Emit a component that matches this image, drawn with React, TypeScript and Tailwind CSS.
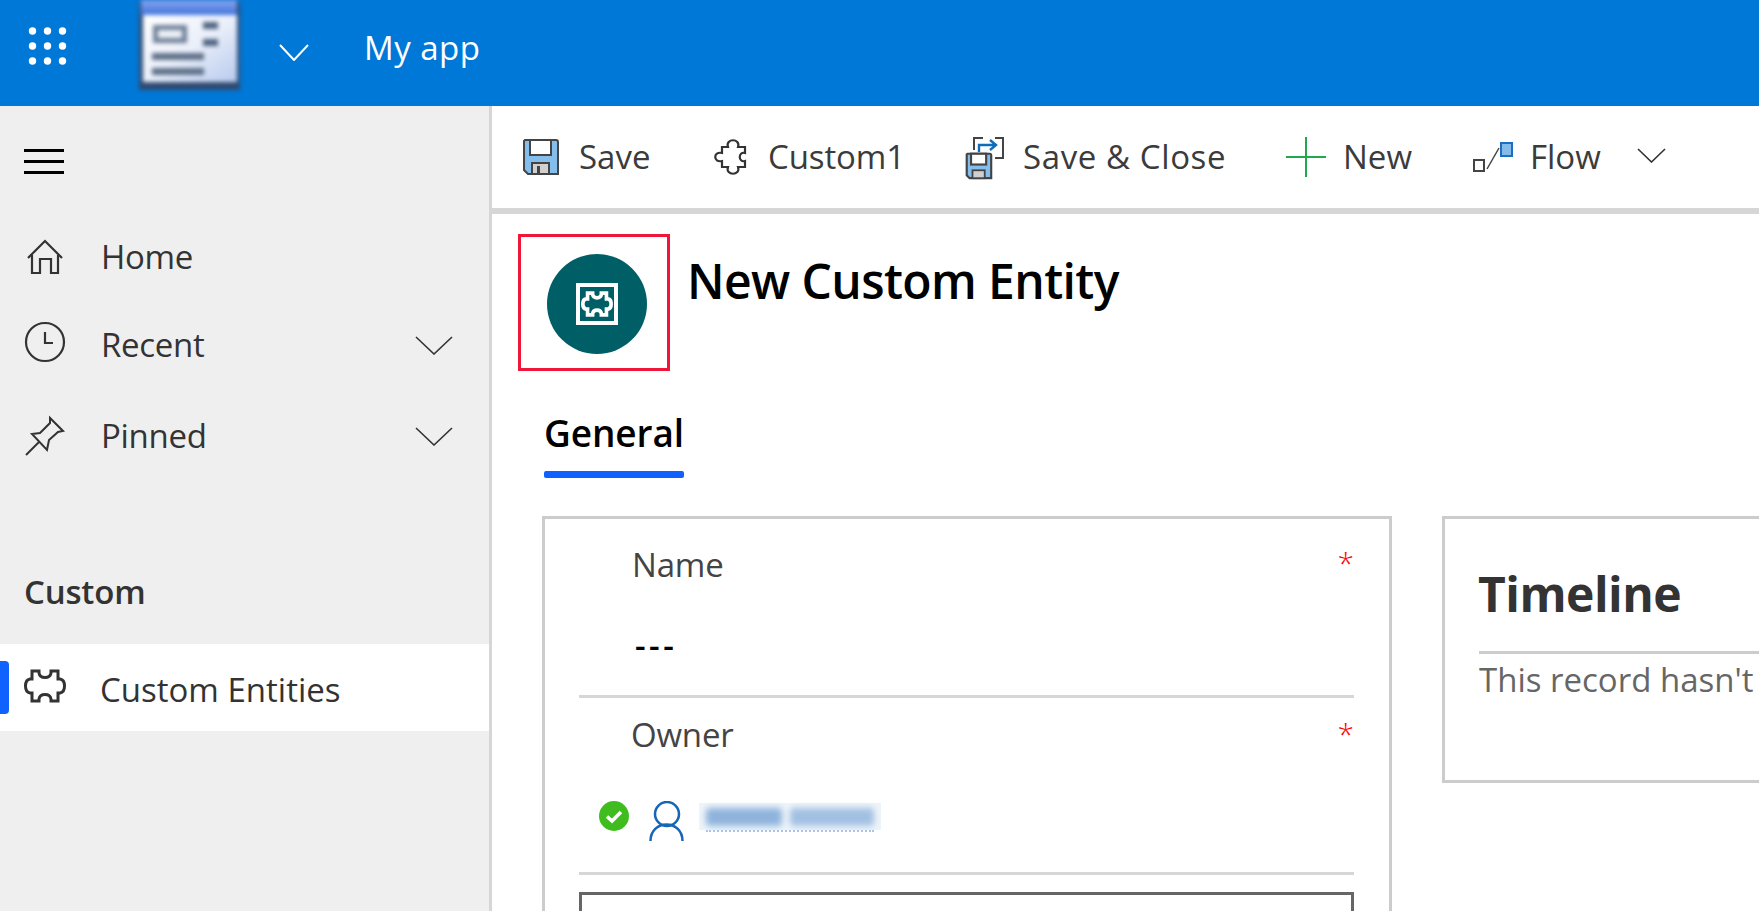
import React from 'react';

const PUZZLE = 'M17 15H24V17C25 23 35 23 36 17V15H43V23H45C51 24 51 36 45 37H43V45H36V43C35 37 25 37 24 43V45H17V37H15C9 36 9 24 15 23H17Z';

const Chevron: React.FC<{ w: number; h: number; color?: string; sw?: number }> = ({ w, h, color = '#333', sw = 1.6 }) => (
  <svg width={w} height={h} viewBox={`0 0 ${w} ${h}`} fill="none">
    <path d={`M1 1L${w / 2} ${h - 1}L${w - 1} 1`} stroke={color} strokeWidth={sw} />
  </svg>
);

const Floppy: React.FC<{ size: number }> = ({ size }) => (
  <svg width={size} height={size} viewBox="0 0 36 36">
    <path d="M2 1H33a2 2 0 0 1 2 2V35H5L1 31V2Z" fill="#83beec" stroke="#444" strokeWidth="2" />
    <rect x="7" y="1" width="21" height="15" fill="#fff" stroke="#444" strokeWidth="2" />
    <rect x="9" y="24" width="17" height="11" fill="#d0d0d0" stroke="#444" strokeWidth="2" />
    <rect x="14" y="27" width="3" height="8" fill="#444" />
  </svg>
);

const NavRow: React.FC<{ icon: React.ReactNode; label: string; chevron?: boolean; className?: string }> = ({ icon, label, chevron, className }) => (
  <div className={`flex h-[88px] items-center pl-[20px] pr-[36px] ${className ?? ''}`}>
    <div className="w-[50px] h-[50px] shrink-0">{icon}</div>
    <span className="ml-[31px] flex-1 text-[33px] tracking-[-0.3px] text-[#333]">{label}</span>
    {chevron && <Chevron w={38} h={19} />}
  </div>
);

const CommandItem: React.FC<{ icon: React.ReactNode; label: string; slot: string; tracking: string }> = ({ icon, label, slot, tracking }) => (
  <div className="flex items-center">
    <div className={`flex items-center ${slot}`}>{icon}</div>
    <span className={`text-[33px] text-[#3b3b3b] whitespace-nowrap ${tracking}`}>{label}</span>
  </div>
);

const App: React.FC = () => {
  return (
    <div className="h-[911px] w-[1759px] overflow-hidden bg-white font-['Open_Sans',sans-serif]">
      {/* top bar */}
      <header className="flex h-[106px] items-center overflow-hidden bg-[#0078d7]">
        <svg className="ml-[20px] shrink-0" width="55" height="55" viewBox="0 0 55 55" fill="#fff">
          {[12.5, 27.5, 42.5].flatMap((x) =>
            [12.5, 27.5, 42.5].map((y) => <circle key={`${x}-${y}`} cx={x} cy={y - 7.5} r="3.7" />)
          )}
        </svg>
        <svg className="ml-[61px] shrink-0 self-start blur-[2px]" width="106" height="92" viewBox="0 0 106 92">
          <defs>
            <linearGradient id="logoBody" x1="0" y1="0" x2="1" y2="1">
              <stop offset="0" stopColor="#ffffff" />
              <stop offset="0.5" stopColor="#eaeffa" />
              <stop offset="1" stopColor="#b8caee" />
            </linearGradient>
            <linearGradient id="logoTitle" x1="0" y1="0" x2="0" y2="1">
              <stop offset="0" stopColor="#8aa6ee" />
              <stop offset="1" stopColor="#3f73dc" />
            </linearGradient>
          </defs>
          <rect x="3" y="2" width="101" height="88" fill="#2f4a70" />
          <rect x="5" y="0" width="96" height="15" fill="url(#logoTitle)" />
          <rect x="7" y="15" width="94" height="67" fill="url(#logoBody)" />
          <rect x="19.5" y="27.5" width="29" height="13" fill="#eef2f8" stroke="#6f8099" strokeWidth="5" />
          <rect x="67" y="22" width="15" height="7" fill="#4f6482" />
          <rect x="67" y="39" width="15" height="7" fill="#4f6482" />
          <rect x="16" y="53" width="52" height="7" fill="#5f7189" />
          <rect x="16" y="68" width="52" height="7" fill="#5f7189" />
        </svg>
        <div className="ml-[37px] shrink-0 -mt-[2px]">
          <Chevron w={30} h={17} color="#fff" sw={2} />
        </div>
        <span className="ml-[55px] pb-[10px] text-[33px] tracking-[0.5px] text-white">My app</span>
      </header>

      <div className="flex h-[805px]">
        {/* sidebar */}
        <aside className="w-[492px] shrink-0 border-r-[3px] border-[#d6d6d6] bg-[#efefef]">
          <div className="flex w-[64px] flex-col gap-[8px] pl-[24px] pt-[43px]">
            <div className="h-[3px] w-[40px] bg-black" />
            <div className="h-[3px] w-[40px] bg-black" />
            <div className="h-[3px] w-[40px] bg-black" />
          </div>
          <NavRow
            className="mt-[39px]"
            label="Home"
            icon={
              <svg width="50" height="50" viewBox="0 0 50 50" fill="none" stroke="#333" strokeWidth="2.2">
                <path d="M8 26L25 9L42 26" />
                <path d="M12 23V41H20V27H31V41H38V23" />
              </svg>
            }
          />
          <NavRow
            label="Recent"
            chevron
            icon={
              <svg width="50" height="50" viewBox="0 0 50 50" fill="none" stroke="#333" strokeWidth="2.2">
                <circle cx="25" cy="22" r="19" />
                <path d="M25 12V23H33" />
              </svg>
            }
          />
          <NavRow
            className="mt-[3px]"
            label="Pinned"
            chevron
            icon={
              <svg width="50" height="50" viewBox="0 0 50 50" fill="none" stroke="#333" strokeWidth="2">
                <path d="M12 23L20 22L30 12L30 7L43 20L38 21L29 29L27 39Z" />
                <path d="M6 44L19 31" />
              </svg>
            }
          />
          <div className="mt-[92px] pl-[24px] text-[33px] font-semibold leading-[40px] tracking-[-0.2px] text-[#333]">Custom</div>
          <div className="mt-[32px] flex h-[87px] items-center bg-white">
            <div className="h-[53px] w-[9px] rounded-r-[4px] bg-[#0f62fe]" />
            <svg className="ml-[6px] -mt-[3px] shrink-0" width="60" height="60" viewBox="0 0 60 60" fill="none" stroke="#333" strokeWidth="3">
              <path d={PUZZLE} />
            </svg>
            <span className="ml-[25px] pt-[4px] text-[33px] text-[#333]">Custom Entities</span>
          </div>
        </aside>

        {/* main */}
        <main className="min-w-0 flex-1 overflow-hidden">
          <div className="grid h-[102px] grid-cols-[187px_250px_326px_187px_164px_auto] items-center pl-[31px]">
            <CommandItem slot="w-[56px]" tracking="tracking-[0px]" label="Save" icon={<Floppy size={36} />} />
            <CommandItem
              slot="w-[58px]"
              tracking="tracking-[-0.1px]"
              label="Custom1"
              icon={
                <svg width="40" height="44" viewBox="0 0 40 44" fill="none" stroke="#333" strokeWidth="2.2">
                  <path d="M12 12H18C15 3 31 3 28 12H35V18C28 16 28 28 35 26V32H28C31 41 15 41 18 32H12V26C3 28 3 16 12 18Z" />
                </svg>
              }
            />
            <CommandItem
              slot="w-[63px]"
              tracking="tracking-[0.6px]"
              label="Save & Close"
              icon={
                <svg width="46" height="50" viewBox="0 0 46 50" fill="none">
                  <path d="M23 6H14V18M35 6H43V26H35" stroke="#444" strokeWidth="2" />
                  <path d="M19 20V13H35M30 8L36 13L30 18" stroke="#0f6cbd" strokeWidth="2.4" />
                  <g transform="translate(6 21) scale(0.72)">
                    <path d="M2 1H33a2 2 0 0 1 2 2V35H5L1 31V2Z" fill="#83beec" stroke="#444" strokeWidth="3" />
                    <rect x="7" y="1" width="21" height="15" fill="#fff" stroke="#444" strokeWidth="3" />
                    <rect x="9" y="24" width="17" height="11" fill="#d0d0d0" stroke="#444" strokeWidth="2.5" />
                  </g>
                </svg>
              }
            />
            <CommandItem
              slot="w-[57px]"
              tracking="tracking-[0px]"
              label="New"
              icon={
                <svg width="40" height="40" viewBox="0 0 40 40" stroke="#20a84f" strokeWidth="2">
                  <path d="M20 0V40M0 20H40" />
                </svg>
              }
            />
            <CommandItem
              slot="w-[57px]"
              tracking="tracking-[0px]"
              label="Flow"
              icon={
                <svg width="40" height="30" viewBox="0 0 40 30" fill="none">
                  <rect x="1" y="18" width="10" height="11" stroke="#444" strokeWidth="2" />
                  <path d="M14 27L26 6" stroke="#444" strokeWidth="1.5" />
                  <rect x="28" y="1" width="11" height="13" fill="#85bbe8" stroke="#1a6fc4" strokeWidth="2" />
                </svg>
              }
            />
            <div className="-mt-[4px]">
              <Chevron w={29} h={15} />
            </div>
          </div>
          <div className="h-[6px] bg-[#d6d6d6]" />

          <div className="mt-[20px] flex items-start pl-[26px]">
            <div className="flex h-[137px] w-[152px] shrink-0 items-center justify-center border-[3px] border-[#ee1639] pl-[6px] pt-[2px]">
              <div className="flex h-[100px] w-[100px] items-center justify-center rounded-full bg-[#005e66]">
                <div className="flex h-[42px] w-[42px] items-center justify-center border-[4px] border-white">
                  <svg width="32" height="32" viewBox="8 8 44 44" fill="none" stroke="#fff" strokeWidth="5">
                    <path d={PUZZLE} />
                  </svg>
                </div>
              </div>
            </div>
            <h1 className="ml-[17px] mt-[15px] text-[48px] font-semibold leading-[64px] tracking-[-0.6px] text-black">New Custom Entity</h1>
          </div>

          <div className="ml-[52px] mt-[39px] w-[140px]">
            <div className="text-[37px] font-semibold leading-[46px] tracking-[-0.1px] text-black whitespace-nowrap">General</div>
            <div className="mt-[15px] h-[7px] rounded-[2px] bg-[#0f62fe]" />
          </div>

          <div className="ml-[50px] mt-[38px] flex gap-[50px]">
            {/* form card */}
            <section className="h-[480px] w-[850px] shrink-0 border-[3px] border-b-0 border-[#cccccc] pl-[34px] pr-[35px]">
              <div className="flex items-start justify-between pt-[26px]">
                <span className="pl-[53px] text-[33px] leading-[40px] tracking-[-0.2px] text-[#444]">Name</span>
                <span className="text-[30px] font-light leading-[36px] text-[#f00]">*</span>
              </div>
              <div className="mt-[40px] pb-[30px] pl-[56px] text-[33px] font-semibold leading-[40px] tracking-[3.5px] text-black">---</div>
              <div className="h-[3px] bg-[#d6d6d6]" />
              <div className="flex items-start justify-between pt-[17px]">
                <span className="pl-[52px] text-[33px] leading-[40px] tracking-[-0.2px] text-[#444]">Owner</span>
                <span className="text-[30px] font-light leading-[38px] text-[#f00]">*</span>
              </div>
              <div className="mt-[46px] flex h-[41px] items-start pl-[20px]">
                <svg width="30" height="30" viewBox="0 0 30 30">
                  <circle cx="15" cy="15" r="15" fill="#3fbd1e" />
                  <path d="M8 15.5L13 20L22 11" fill="none" stroke="#fff" strokeWidth="3.5" />
                </svg>
                <svg className="ml-[20px]" width="35" height="40" viewBox="0 0 35 40" fill="none" stroke="#1565b9" strokeWidth="2.5">
                  <circle cx="18" cy="13" r="12" />
                  <path d="M1.5 40C1.5 18 33.5 18 33.5 40" />
                </svg>
                <div className="ml-[15px] mt-[2px] w-[182px]">
                  <div className="flex h-[27px] items-center gap-[8px] bg-[#eef4fa] px-[7px]">
                    <div className="h-[18px] w-[76px] rounded-sm bg-[#8fb3dc] blur-[3px]" />
                    <div className="h-[18px] w-[84px] rounded-sm bg-[#a2c0e2] blur-[3px]" />
                  </div>
                  <div className="mx-[7px] h-[2px] border-t-2 border-dotted border-[#a9c6e8]" />
                </div>
              </div>
              <div className="mt-[30px] h-[3px] bg-[#d6d6d6]" />
              <div className="mt-[17px] h-[80px] border-[3px] border-b-0 border-[#666]" />
            </section>

            {/* timeline card */}
            <section className="h-[267px] w-[500px] shrink-0 border-[3px] border-[#cccccc] pl-[33px]">
              <h2 className="pt-[45px] text-[48px] font-bold leading-[60px] tracking-[-0.5px] text-[#333]">Timeline</h2>
              <div className="ml-[1px] mt-[27px] h-[3px] bg-[#cccccc]" />
              <p className="ml-[1px] mt-[6px] text-[33px] leading-[40px] text-[#666] whitespace-nowrap">This record hasn't</p>
            </section>
          </div>
        </main>
      </div>
    </div>
  );
};

export default App;
